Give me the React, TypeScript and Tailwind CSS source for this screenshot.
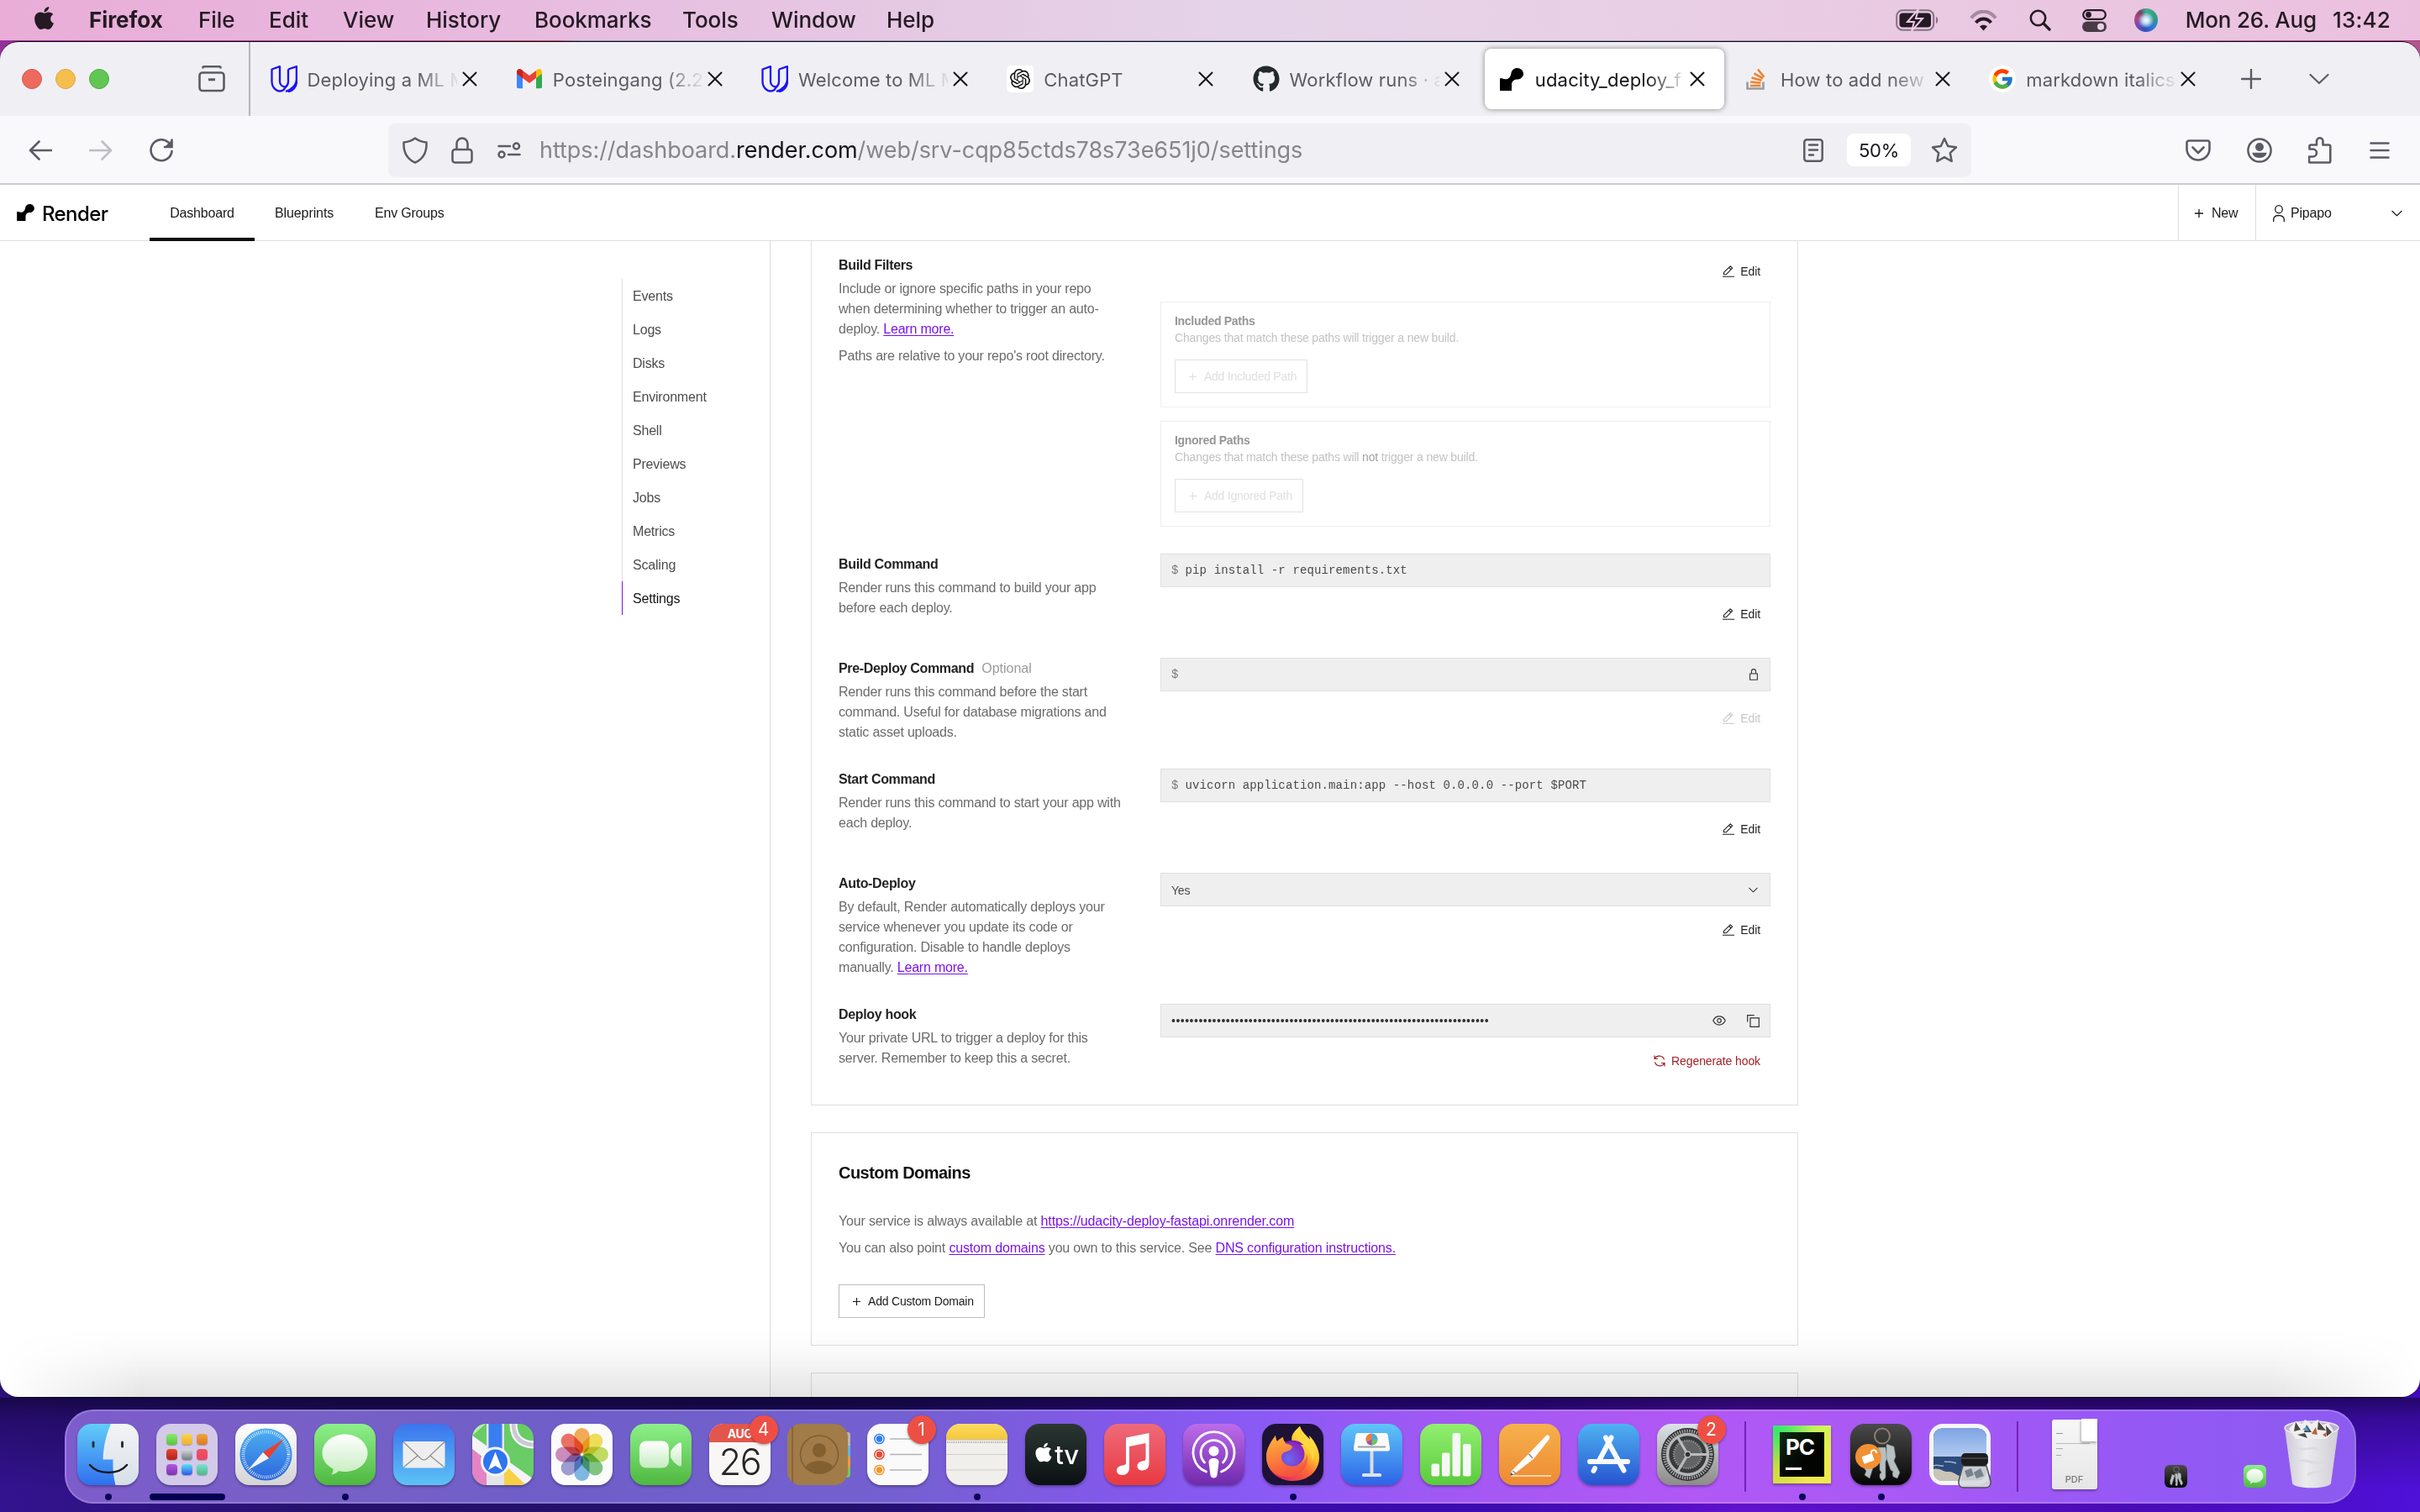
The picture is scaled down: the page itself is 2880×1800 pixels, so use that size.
import React from "react";
import { FaApple, FaGithub } from "react-icons/fa";
import { FcGoogle } from "react-icons/fc";
import { SiOpenai } from "react-icons/si";

/* ---------- shared line icons ---------- */

type IconProps = { className?: string };

function RenderMark({ className }: IconProps) {
  return (
    <svg viewBox="0 0 28 27" className={className} fill="currentColor">
      <path d="M20.6 0C16.9 0 13.9 2.7 13.4 6.2 13 9.8 10.700 13.300 6.800 13.300H6.700C5.200 13.300 3.900 12.900 2.700 12.300H0V27H14V19.800C14 16.500 16.500 13.700 19.800 13.600H20.600C24.700 13.600 28 10.600 28 6.800S24.700 0 20.600 0Z" />
    </svg>
  );
}

function Udacity() {
  return (
    <svg viewBox="0 0 32 32" className="size-8" fill="none" stroke="#1c12f5" strokeWidth="2.300" strokeLinejoin="round">
      <path d="M1.500 4.500 11 1.200V19c0 4 3 6.500 7 6.500l-2.500 3.500C13 31 9 31 6.500 29 3 26.500 1.500 23.500 1.500 19V4.500Z" />
      <path d="M21 4.500 31 1.200V19c0 7-5 11.500-10.500 12.200M18 25.500c2-1.500 3-3.500 3-6.500V4.500" />
      <path d="M31 1.200V16c0 7-6 13-13 14.800" />
    </svg>
  );
}

function Gmail() {
  return (
    <svg viewBox="0 0 32 32" className="size-8">
      <path d="M1 8v17.500c0 1 .8 1.700 1.700 1.700H8V13Z" fill="#4285f4" />
      <path d="M24 13v14.200h5.300c1 0 1.700-.8 1.700-1.700V8Z" fill="#34a853" />
      <path d="M24 6v9l7-5.300V7.500c0-3-3.300-4.500-5.500-2.800Z" fill="#fbbc04" />
      <path d="M8 15V6l8 6 8-6v9l-8 6Z" fill="#ea4335" />
      <path d="M1 7.500v2.200L8 15V6L6.500 4.700C4.300 3 1 4.500 1 7.500Z" fill="#c5221f" />
    </svg>
  );
}

function StackOverflow() {
  return (
    <svg viewBox="0 0 32 32" className="size-8" fill="none" strokeWidth="2.600">
      <path d="M4.500 19.500v8h19v-8" stroke="#9a9b9e" />
      <g stroke="#f0822a">
        <path d="M8 24h12.500M8.200 19.500l12.300 1.300M9.500 14.500l12 3.200M12.500 9.300l10.500 6M17 4.500l7.500 9.200" />
      </g>
    </svg>
  );
}

function CloseX() {
  return (
    <svg viewBox="0 0 18 18" className="size-[18px]" stroke="#15141a" strokeWidth="2" strokeLinecap="round">
      <path d="M1.500 1.500l15 15M16.500 1.500l-15 15" />
    </svg>
  );
}

function Chevron({ className }: IconProps) {
  return (
    <svg viewBox="0 0 24 14" className={className} fill="none" stroke="currentColor" strokeWidth="2.200" strokeLinecap="round" strokeLinejoin="round">
      <path d="M1.500 2l10.500 10 10.500-10" />
    </svg>
  );
}

function Plus({ className }: IconProps) {
  return (
    <svg viewBox="0 0 10 10" className={className} fill="none" stroke="currentColor" strokeWidth="1.300">
      <path d="M5 0v10M0 5h10" />
    </svg>
  );
}

function Pencil() {
  return (
    <svg viewBox="0 0 14 14" className="size-[14px]" fill="none" stroke="currentColor" strokeWidth="1.100" strokeLinejoin="round">
      <path d="M0 13.300h14M1.500 10.800v-2.500L9.200.8l2.500 2.400-7.500 7.600H1.500ZM7.600 2.500l2.500 2.400" />
    </svg>
  );
}

/* ---------- menu bar ---------- */

const menus = [
  ["File", "w-[84px]"],
  ["Edit", "w-[88px]"],
  ["View", "w-[99px]"],
  ["History", "w-[129px]"],
  ["Bookmarks", "w-[176px]"],
  ["Tools", "w-[106px]"],
  ["Window", "w-[137px]"],
  ["Help", "w-[80px]"],
];

function MenuBar() {
  return (
    <div className="flex h-12 items-center bg-[linear-gradient(to_right,#e9add8,#e8b8de_18%,#e5cbe4_40%,#e5d4e9_52%,#e8d0e6_66%,#eac8e2_82%,#ebc0de)] text-[26px] text-[#241a24]">
      <FaApple className="ml-[37px] size-[31px] -translate-y-[3px]" />
      <span className="ml-[38px] w-[130px] -translate-y-px font-bold tracking-[-0.050px]">Firefox</span>
      {menus.map(([m, w]) => (
        <span key={m} className={"-translate-y-px font-medium tracking-[-0.050px] " + w}>{m}</span>
      ))}
      <div className="ml-auto flex items-center pr-[35px]">
        <svg viewBox="0 0 52 26" className="h-[26px] w-[52px]">
          <rect x="1.200" y="1.200" width="44" height="23.600" rx="7" fill="none" stroke="#241a24" strokeOpacity=".5" strokeWidth="2" />
          <path d="M48 9c3 1 3 7 0 8Z" fill="#241a24" fillOpacity=".5" />
          <rect x="4.500" y="4.500" width="37.500" height="17" rx="4" fill="#241a24" />
          <path d="M27 0 14 15h8l-3 11 13-15h-8Z" fill="#241a24" stroke="#eacbe4" strokeWidth="2" />
        </svg>
        <svg viewBox="0 0 33 25" className="ml-[36px] h-[25px] w-[33px]" fill="none" stroke="#241a24" strokeWidth="4">
          <path d="M2 9.500C10-1 23-1 31 9.500" strokeOpacity=".35" />
          <path d="M7.500 15c5-6 13-6 18 0" />
          <path d="M16.500 24.500 12 19.500c2.500-2.500 6.500-2.500 9 0Z" fill="#241a24" stroke="none" />
        </svg>
        <svg viewBox="0 0 26 26" className="ml-[38px] size-[26px]" fill="none" stroke="#241a24" strokeWidth="2.600" strokeLinecap="round">
          <circle cx="10.500" cy="10.500" r="8.700" />
          <path d="M17 17l7 7" strokeWidth="3.200" />
        </svg>
        <svg viewBox="0 0 29 27" className="ml-[37px] h-[27px] w-[29px]">
          <rect x="1.200" y="1.200" width="26.600" height="10.600" rx="5.300" fill="none" stroke="#241a24" strokeWidth="2.200" />
          <circle cx="7.500" cy="6.500" r="3.400" fill="#241a24" />
          <rect x="0" y="14.500" width="29" height="12.500" rx="6.200" fill="#483a46" />
          <circle cx="22" cy="20.700" r="4" fill="#ead0e6" />
        </svg>
        <div className="ml-[33px] size-7 rounded-full bg-[radial-gradient(circle_at_50%_50%,#fff_0%,#b9d9f0_22%,transparent_48%),conic-gradient(#3fae8c,#2f9d7e_20%,#2f7ad6_38%,#2b53b8_52%,#6a4bc0_64%,#b5447f_78%,#78436c_90%,#3fae8c)]" />
        <span className="ml-[33px] -translate-y-px font-medium tracking-[-0.200px]">Mon 26. Aug</span>
        <span className="ml-[19px] -translate-y-px font-medium tracking-[0.200px]">13:42</span>
      </div>
    </div>
  );
}

/* ---------- browser chrome ---------- */

const tabs: { icon: React.ReactNode; title: string; active?: boolean }[] = [
  { icon: <Udacity />, title: "Deploying a ML M" },
  { icon: <Gmail />, title: "Posteingang (2.2" },
  { icon: <Udacity />, title: "Welcome to ML M" },
  {
    icon: (
      <span className="flex size-8 items-center justify-center rounded-[5px] bg-white">
        <SiOpenai className="size-6" color="#111" />
      </span>
    ),
    title: "ChatGPT",
  },
  { icon: <FaGithub className="size-8" color="#24292e" />, title: "Workflow runs · a" },
  { icon: <RenderMark className="mx-0.5 h-[27px] w-7 text-black" />, title: "udacity_deploy_f", active: true },
  { icon: <StackOverflow />, title: "How to add new l" },
  {
    icon: (
      <span className="flex size-8 items-center justify-center rounded-full bg-white">
        <FcGoogle className="size-7" />
      </span>
    ),
    title: "markdown italics",
  },
];

function TabBar() {
  return (
    <div className="flex h-[88px] shrink-0 items-center bg-[#f0f0f4] text-[#5b5b66]">
      <div className="flex gap-4 pl-[26px]">
        <span className="size-6 rounded-full border border-[#d8574c] bg-[#ee6a5f]" />
        <span className="size-6 rounded-full border border-[#dba53f] bg-[#f5bf4f]" />
        <span className="size-6 rounded-full border border-[#50ab43] bg-[#61c654]" />
      </div>
      <svg viewBox="0 0 32 32" className="ml-[106px] size-8" fill="none" stroke="#5b5b66" strokeWidth="2.600">
        <rect x="1.500" y="8.500" width="29" height="21.500" rx="3.500" />
        <path d="M5.500 2.500c0-1 .5-1.200 1.200-1.200h18.600c.7 0 1.200.2 1.200 1.200" strokeLinecap="round" />
        <path d="M12 16.800h8" strokeWidth="3" />
      </svg>
      <div className="ml-[28px] h-full w-[2px] bg-[#b5b5bb]" />
      <div className="ml-[4px] flex w-[2338px]">
        {tabs.map((t, i) => (
          <div
            key={i}
            className={
              "mx-[3.600px] flex h-[72px] flex-1 items-center rounded-lg pl-4 " +
              (t.active ? "bg-white text-[#15141a] shadow-[0_0_6px_rgba(0,0,0,0.45)]" : "")
            }
          >
            {t.icon}
            <span className="ml-[12px] w-[178px] overflow-hidden pt-[3px] text-[22px] tracking-[0.150px] whitespace-nowrap [mask-image:linear-gradient(to_right,black_74%,rgba(0,0,0,0.15)_98%)]">
              {t.title}
            </span>
            <span className="ml-1.5"><CloseX /></span>
          </div>
        ))}
      </div>
      <svg viewBox="0 0 24 24" className="ml-[27px] size-6" stroke="#5b5b66" strokeWidth="2.400" strokeLinecap="round">
        <path d="M12 1v22M1 12h22" />
      </svg>
      <Chevron className="ml-[57px] h-[14px] w-6" />
    </div>
  );
}

function Toolbar() {
  return (
    <div className="flex h-20 shrink-0 items-center bg-[#f9f9fb] pt-px text-[#5b5b66]">
      <svg viewBox="0 0 28 24" className="ml-[34px] h-6 w-7" fill="none" stroke="#5b5b66" strokeWidth="2.600" strokeLinecap="round" strokeLinejoin="round">
        <path d="M27 12H2M12.500 1.500 2 12l10.500 10.500" />
      </svg>
      <svg viewBox="0 0 28 24" className="ml-[44px] h-6 w-7" fill="none" stroke="#bdbdc3" strokeWidth="2.600" strokeLinecap="round" strokeLinejoin="round">
        <path d="M1 12h25M15.500 1.500 26 12 15.500 22.500" />
      </svg>
      <svg viewBox="0 0 28 28" className="ml-[44px] size-7" fill="none" stroke="#5b5b66" strokeWidth="2.600" strokeLinecap="round">
        <path d="M26.500 15a12.500 12.500 0 1 1-4-10.500" />
        <path d="M26.500 1.500v8.500h-8.500Z" fill="#5b5b66" stroke="none" />
        <path d="M26.500 1.500v8.500h-8.500" />
      </svg>

      <div className="ml-[256px] flex h-16 w-[1884px] items-center rounded-lg bg-[#f0f0f4]">
        <svg viewBox="0 0 30 32" className="ml-[17px] h-8 w-[30px]" fill="none" stroke="#5b5b66" strokeWidth="2.500" strokeLinejoin="round">
          <path d="M15 1.500C11 4.500 6 6 1.500 6.500 1 17 5 26 15 30.500 25 26 29 17 28.500 6.500 24 6 19 4.500 15 1.500Z" />
        </svg>
        <svg viewBox="0 0 26 32" className="ml-[28px] h-8 w-[26px]" fill="none" stroke="#5b5b66" strokeWidth="2.500">
          <rect x="1.500" y="15" width="23" height="15.500" rx="3" />
          <path d="M6.500 15V8a6.500 6.500 0 0 1 13 0v7" />
        </svg>
        <svg viewBox="0 0 28 20" className="ml-[29px] h-5 w-7" fill="none" stroke="#5b5b66" strokeWidth="2.500" strokeLinecap="round">
          <path d="M1.500 5H15M13 15h13.500" />
          <circle cx="22.500" cy="5" r="3.500" />
          <circle cx="5" cy="15" r="3.500" />
        </svg>
        <div className="ml-[22px] pt-[2px] text-[27px] tracking-[-0.060px] whitespace-nowrap text-[#85858c]">
          https://dashboard.<span className="text-[#15141a]">render.com</span>/web/srv-cqp85ctds78s73e651j0/settings
        </div>
        <div className="ml-auto flex items-center pr-[16px]">
          <svg viewBox="0 0 24 28" className="h-7 w-6" fill="none" stroke="#5b5b66" strokeWidth="2.500" strokeLinecap="round">
            <rect x="1.300" y="1.300" width="21.400" height="25.400" rx="3" />
            <path d="M7 7.500h10M7 13.500h10M7 19.500h5" />
          </svg>
          <span className="ml-7 flex h-[39px] w-[76px] items-center justify-center rounded-lg bg-white pt-px text-[22px] tracking-[-0.300px] text-[#15141a]">50%</span>
          <svg viewBox="0 0 32 31" className="ml-6 h-[31px] w-8" fill="none" stroke="#5b5b66" strokeWidth="2.500" strokeLinejoin="round">
            <path d="M16 2l4.200 9 9.800 1.300-7.200 6.800 1.900 9.900-8.700-4.900L7.300 29l1.900-9.900L2 12.300 11.800 11Z" />
          </svg>
        </div>
      </div>

      <svg viewBox="0 0 30 26" className="ml-[255px] h-[26px] w-[30px]" fill="none" stroke="#5b5b66" strokeWidth="2.600" strokeLinecap="round" strokeLinejoin="round">
        <path d="M4 1.500h22c1.500 0 2.500 1 2.500 2.500v7C28.500 19 22 24.500 15 24.500S1.500 19 1.500 11V4c0-1.500 1-2.500 2.500-2.500Z" />
        <path d="M8.500 9.500 15 16l6.500-6.500" />
      </svg>
      <svg viewBox="0 0 30 30" className="ml-[43px] size-[30px]">
        <circle cx="15" cy="15" r="13.600" fill="none" stroke="#5b5b66" strokeWidth="2.500" />
        <circle cx="15" cy="11" r="5" fill="#5b5b66" />
        <path d="M6.500 17.800h17c0 3.700-4 6.200-8.500 6.200s-8.500-2.500-8.500-6.200Z" fill="#5b5b66" />
      </svg>
      <svg viewBox="0 0 28 32" className="ml-[43px] h-8 w-7" fill="none" stroke="#5b5b66" strokeWidth="2.600" strokeLinejoin="round">
        <path d="M2 30.500c-.7 0-1-.3-1-1v-6h4.500a4.500 4.500 0 0 0 0-9H1.500V11c0-1 .7-1.500 1.500-1.500h7V5a3.500 3.500 0 0 1 7.500 0v4.500h7c1 0 1.800.7 1.800 1.700v17.500c0 1-.8 1.800-1.800 1.800Z" />
      </svg>
      <svg viewBox="0 0 24 20" className="ml-[45px] h-5 w-6" stroke="#5b5b66" strokeWidth="2.500" strokeLinecap="round">
        <path d="M1.500 1.500h21M1.500 10h21M1.500 18.500h21" />
      </svg>
    </div>
  );
}

/* ---------- page ---------- */

function PageHeader() {
  return (
    <div className="flex h-[67px] shrink-0 items-stretch border-b border-[#dedede] text-[16px] tracking-[-0.200px] text-[#1a1a1a]">
      <div className="flex w-[178px] items-center pl-5">
        <RenderMark className="h-5 w-[21px] text-black" />
        <span className="ml-[9px] pt-[3px] text-[24px] font-medium tracking-[-0.600px] text-black [font-family:Inter,sans-serif]">Render</span>
      </div>
      <div className="-mb-px flex w-[125px] items-center justify-center border-b-4 border-[#0d0d0d] pt-[5px]">Dashboard</div>
      <div className="flex w-[119px] items-center pt-px pl-6 tracking-[-0.100px]">Blueprints</div>
      <div className="flex items-center pt-px pl-6">Env Groups</div>
      <div className="ml-auto flex w-[92px] items-center border-l border-[#dedede] pt-px pl-[19px]">
        <Plus className="size-[10px]" />
        <span className="ml-[10px]">New</span>
      </div>
      <div className="flex w-[196px] items-center border-l border-[#dedede] pt-px pl-5">
        <svg viewBox="0 0 14 20" className="h-5 w-[14px]" fill="none" stroke="currentColor" strokeWidth="1.300">
          <ellipse cx="7" cy="5.200" rx="4.300" ry="4.500" />
          <path d="M.7 20v-2.500c0-3 2.300-5 6.300-5s6.300 2 6.300 5V20" />
        </svg>
        <span className="ml-[7px]">Pipapo</span>
        <Chevron className="mr-[21px] ml-auto h-[8px] w-[13px]" />
      </div>
    </div>
  );
}

const navItems = ["Events", "Logs", "Disks", "Environment", "Shell", "Previews", "Jobs", "Metrics", "Scaling", "Settings"];

function SideNav() {
  return (
    <div className="w-[917px] shrink-0 border-r border-[#dedede]">
      <div className="mt-[45px] ml-[740px]">
        {navItems.map((n) => (
          <div
            key={n}
            className={
              "flex h-10 items-center border-l pt-[2px] pl-3 text-[16px] tracking-[-0.200px] " +
              (n === "Settings" ? "border-[#7a12e8] text-[#141414]" : "border-[#dedede] text-[#4d4d4d]")
            }
          >
            {n}
          </div>
        ))}
      </div>
    </div>
  );
}

function Link({ children }: { children: React.ReactNode }) {
  return <span className="text-[#7a12e8] underline decoration-1 underline-offset-2">{children}</span>;
}

function Row({ title, note, lines, after, children }: { title: string; note?: string; lines: React.ReactNode[]; after?: string; children: React.ReactNode }) {
  return (
    <div className="flex">
      <div className="w-[383px] shrink-0 text-[16px] leading-6 tracking-[-0.200px] whitespace-nowrap text-[#6b6b6b]">
        <div className="relative top-px mb-1">
          <span className="font-bold tracking-[-0.330px] text-[#222]">{title}</span>
          {note && <span className="ml-[9px] tracking-[0px] text-[#9b9b9b]">{note}</span>}
        </div>
        {lines.map((l, i) => (
          <div key={i} className="relative top-px">{l}</div>
        ))}
        {after && <div className="relative top-px mt-2">{after}</div>}
      </div>
      <div className="flex-1">{children}</div>
    </div>
  );
}

function EditButton({ muted }: { muted?: boolean }) {
  return (
    <div className={"flex h-10 items-center justify-end pr-3 text-[14px] tracking-[-0.100px] " + (muted ? "text-[#c6c6c6]" : "text-[#1f1f1f]")}>
      <Pencil />
      <span className="ml-[7px]">Edit</span>
    </div>
  );
}

function Field({ children }: { children: React.ReactNode }) {
  return <div className="flex h-10 items-center border border-[#e0e0e0] bg-[#efefef] px-3 text-[14px] text-[#4a4a4a]">{children}</div>;
}

function Command({ text }: { text?: string }) {
  return (
    <div className="flex gap-[8px] pt-px text-[14px] tracking-[0.125px] whitespace-pre [font-family:'Liberation_Mono',monospace]">
      <span className="text-[#7a7a7a]">$</span>
      <span>{text}</span>
    </div>
  );
}

function PathBox({ title, desc, button }: { title: string; desc: React.ReactNode; button: string }) {
  return (
    <div className="h-[126px] border border-[#eeeeee] px-4 pt-3 text-[14px] leading-5 tracking-[-0.160px]">
      <div className="font-bold tracking-[-0.300px] text-[#969696]">{title}</div>
      <div className="text-[#c2c2c2]">{desc}</div>
      <div className="mt-4 inline-flex h-10 items-center border border-[#e2e2e2] pr-3 pl-4 text-[#e0e0e0]">
        <Plus className="size-[9px]" />
        <span className="ml-[9px] tracking-[-0.250px]">{button}</span>
      </div>
    </div>
  );
}

function Page() {
  return (
    <div className="relative flex min-h-0 flex-1 flex-col overflow-hidden bg-white [font-family:'Liberation_Sans',sans-serif]">
      <PageHeader />
      <div className="flex min-h-0 flex-1 overflow-hidden">
        <SideNav />
        <div className="ml-12 w-[1175px] shrink-0">
          <div className="flex flex-col gap-8 border-x border-b border-[#dfdfdf] px-8 pt-4 pb-8">
            <Row
              title="Build Filters"
              lines={[
                "Include or ignore specific paths in your repo",
                "when determining whether to trigger an auto-",
                <>deploy. <Link>Learn more.</Link></>,
              ]}
              after="Paths are relative to your repo's root directory."
            >
              <EditButton />
              <div className="mt-4 flex flex-col gap-4">
                <PathBox title="Included Paths" desc="Changes that match these paths will trigger a new build." button="Add Included Path" />
                <PathBox
                  title="Ignored Paths"
                  desc={<>Changes that match these paths will <span className="text-[#a2a2a2]">not</span> trigger a new build.</>}
                  button="Add Ignored Path"
                />
              </div>
            </Row>
            <Row title="Build Command" lines={["Render runs this command to build your app", "before each deploy."]}>
              <Field><Command text="pip install -r requirements.txt" /></Field>
              <div className="mt-3"><EditButton /></div>
            </Row>
            <Row
              title="Pre-Deploy Command"
              note="Optional"
              lines={["Render runs this command before the start", "command. Useful for database migrations and", "static asset uploads."]}
            >
              <Field>
                <Command />
                <svg viewBox="0 0 10 14" className="mr-[2px] ml-auto h-[14px] w-[10px]" fill="none" stroke="#333" strokeWidth="1.100">
                  <path d="M.6 6h8.800v7.300H.6ZM2.500 6V3.200c0-3.400 5-3.400 5 0V6" />
                </svg>
              </Field>
              <div className="mt-3"><EditButton muted /></div>
            </Row>
            <Row title="Start Command" lines={["Render runs this command to start your app with", "each deploy."]}>
              <Field><Command text="uvicorn application.main:app --host 0.0.0.0 --port $PORT" /></Field>
              <div className="mt-3"><EditButton /></div>
            </Row>
            <Row
              title="Auto-Deploy"
              lines={[
                "By default, Render automatically deploys your",
                "service whenever you update its code or",
                "configuration. Disable to handle deploys",
                <>manually. <Link>Learn more.</Link></>,
              ]}
            >
              <Field>
                <span className="pt-0.5 tracking-[-0.200px]">Yes</span>
                <Chevron className="mr-[2px] ml-auto h-[7px] w-[11px] text-[#333]" />
              </Field>
              <div className="mt-2"><EditButton /></div>
            </Row>
            <Row title="Deploy hook" lines={["Your private URL to trigger a deploy for this", "server. Remember to keep this a secret."]}>
              <Field>
                <span className="tracking-[0.500px] text-[#333]">{"•".repeat(70)}</span>
                <svg viewBox="0 0 16 12" className="ml-auto h-3 w-4" fill="none" stroke="#333" strokeWidth="1.200">
                  <path d="M.8 6C4-.8 12-.8 15.200 6 12 12.800 4 12.800.8 6Z" />
                  <circle cx="8" cy="6" r="2.300" />
                </svg>
                <svg viewBox="0 0 15 15" className="ml-[25px] size-[15px]" fill="none" stroke="#333" strokeWidth="1.200">
                  <path d="M4 3.800h10.300v10.500H4ZM.7 8.500V.7h8" />
                </svg>
              </Field>
              <div className="mt-2 flex h-10 items-center justify-end pr-3 text-[14px] tracking-[-0.100px] text-[#a3212b]">
                <svg viewBox="0 0 14 14" className="size-[14px]" fill="none" stroke="currentColor" strokeWidth="1.200">
                  <path d="M1 .5v4h4M1.200 4.200C3.500 0 10.500-.2 12.600 5.500M13 13.500v-4H9M12.800 9.800C10.500 14 3.500 14.200 1.400 8.500" />
                </svg>
                <span className="ml-[7px]">Regenerate hook</span>
              </div>
            </Row>
          </div>

          <div className="mt-8 border border-[#dfdfdf] p-8 text-[16px] leading-6 tracking-[-0.170px] text-[#6b6b6b]">
            <div className="relative top-px text-[20px] leading-7 font-bold tracking-[-0.550px] text-[#111]">Custom Domains</div>
            <div className="relative top-px mt-8">
              Your service is always available at <span className="tracking-[-0.100px]"><Link>https://udacity-deploy-fastapi.onrender.com</Link></span>
            </div>
            <div className="relative top-px mt-2">
              You can also point <Link>custom domains</Link> you own to this service. See <Link>DNS configuration instructions.</Link>
            </div>
            <div className="mt-8 flex h-10 w-[174px] items-center border border-[#bdbdbd] pl-4 text-[14px] text-[#1a1a1a]">
              <Plus className="size-[9px]" />
              <span className="ml-[9px] tracking-[-0.200px] whitespace-nowrap">Add Custom Domain</span>
            </div>
          </div>

          <div className="mt-8 h-[60px] border border-[#dfdfdf]" />
        </div>
      </div>
      <div className="absolute inset-x-0 bottom-0 h-20 bg-[linear-gradient(to_bottom,transparent,rgba(0,0,0,0.025)_35%,rgba(0,0,0,0.105))] [mask-image:linear-gradient(to_right,transparent,black_170px,black_2700px,transparent)]" />
    </div>
  );
}

/* ---------- dock icons ---------- */

const TILE = "size-[73px] rounded-[17px] overflow-hidden shadow-[0_2px_3px_rgba(0,0,0,0.3)]";

function Finder() {
  return (
    <svg viewBox="0 0 73 73" className={TILE}>
      <defs>
        <linearGradient id="fb" x2="0" y2="1"><stop stopColor="#62cdf8" /><stop offset="1" stopColor="#2f6ff0" /></linearGradient>
        <linearGradient id="fw" x2="0" y2="1"><stop stopColor="#f4f4f5" /><stop offset="1" stopColor="#d6dfe8" /></linearGradient>
      </defs>
      <rect width="73" height="73" fill="url(#fb)" />
      <path d="M40 0C34 14 31 28 30.500 42.500h12C42 54 43 64 45.500 73H73V0Z" fill="url(#fw)" />
      <path d="M19 22v5M53.500 22v5" stroke="#26303c" strokeWidth="3" strokeLinecap="round" />
      <path d="M15 49c10 12 34 12 44 0" fill="none" stroke="#16191f" strokeWidth="2.400" strokeLinecap="round" />
    </svg>
  );
}

const padColors = [
  ["#8ee86b", "#54c73c"], ["#f7d54e", "#eeb02f"], ["#f0a33a", "#dd7a25"],
  ["#e5492f", "#b5221b"], ["#d7dce0", "#737b82"], ["#ef5264", "#ea4560"],
  ["#b45ae0", "#7d30b0"], ["#5fe0f5", "#2c59e8"], ["#7fe0d0", "#4cb88a"],
];

function Launchpad() {
  return (
    <div className={TILE + " grid grid-cols-[13px_13px_13px] content-center justify-center gap-x-[5px] gap-y-[5px] bg-[#d3cae9]"}>
      {padColors.map(([a, b], i) => (
        <span key={i} className="size-[13px] rounded-[4px] shadow-[0_1px_1px_rgba(0,0,0,.25)]" style={{ background: `linear-gradient(${a}, ${b})` }} />
      ))}
    </div>
  );
}

function Safari() {
  return (
    <svg viewBox="0 0 73 73" className={TILE}>
      <defs>
        <linearGradient id="sbg" x2="0" y2="1"><stop stopColor="#fff" /><stop offset="1" stopColor="#d4d4d4" /></linearGradient>
        <linearGradient id="sd" x2="0" y2="1"><stop stopColor="#4fb0f0" /><stop offset="1" stopColor="#2a66dd" /></linearGradient>
      </defs>
      <rect width="73" height="73" fill="url(#sbg)" />
      <circle cx="36.500" cy="36.500" r="31" fill="url(#sd)" />
      <circle cx="36.500" cy="36.500" r="27" fill="none" stroke="#fff" strokeOpacity=".8" strokeWidth="4" strokeDasharray=".9 1.500" />
      <path d="M58 18 40 41l-7-7Z" fill="#e8402f" />
      <path d="M15 55l18-21 7 7Z" fill="#f4f4f4" />
    </svg>
  );
}

function Messages({ className }: IconProps) {
  return (
    <svg viewBox="0 0 73 73" className={className}>
      <defs>
        <linearGradient id="mg" x2="0" y2="1"><stop stopColor="#8df08a" /><stop offset="1" stopColor="#4fb83f" /></linearGradient>
        <linearGradient id="mb" x2="0" y2="1"><stop stopColor="#fff" /><stop offset="1" stopColor="#c6ecc0" /></linearGradient>
      </defs>
      <rect width="73" height="73" fill="url(#mg)" />
      <path d="M36.500 12.500c15 0 27 10 27 22.500s-12 22-27 22c-3 0-5-.3-7.500-1-2 2.500-5.500 4.200-9 4.500 2-2 2.800-4.500 2.300-7C14.500 49.500 9.500 43 9.500 35c0-12.500 12-22.500 27-22.500Z" fill="url(#mb)" />
    </svg>
  );
}

function Mail() {
  return (
    <svg viewBox="0 0 73 73" className={TILE}>
      <defs>
        <linearGradient id="ma" x2="0" y2="1"><stop stopColor="#3b74ee" /><stop offset="1" stopColor="#5cc3f6" /></linearGradient>
      </defs>
      <rect width="73" height="73" fill="url(#ma)" />
      <rect x="11.500" y="21" width="50" height="31.500" rx="3" fill="#eeeeee" />
      <path d="M12.500 22 33 41.500c2 1.800 5 1.800 7 0L60.500 22M12.500 51.500 29 38M60.500 51.500 44 38" fill="none" stroke="#8e8e8e" strokeWidth="1.200" />
    </svg>
  );
}

function Maps() {
  return (
    <svg viewBox="0 0 73 73" className={TILE}>
      <rect width="73" height="73" fill="#69cc67" />
      <path d="M0 14 16 0H0Z" fill="#b9ecaa" />
      <path d="M0 14 73 66v7H56L0 30Z" fill="#f4f4f6" />
      <path d="M0 30 22 48v25H0Z" fill="#e583c4" />
      <path d="M38 48 64 73H38Z" fill="#f9cf45" />
      <path d="M17 0h21v73H17Z" fill="#e3e5ea" />
      <path d="M19.500 0h16v40h-16Z" fill="#3a7ef0" />
      <path d="M49 0c0 16 8 24 24 25" fill="none" stroke="#fff" strokeWidth="9" />
      <path d="M49 0c0 16 8 24 24 25" fill="none" stroke="#c9cbd4" strokeWidth="5" />
      <circle cx="27.500" cy="45" r="17.500" fill="#f6f6f8" />
      <circle cx="27.500" cy="45" r="14.500" fill="#2f74f0" />
      <path d="M27.500 33.500 36 55l-8.500-5L19 55Z" fill="#fff" />
    </svg>
  );
}

const petals = ["#f5a03a", "#f0dc3c", "#b9d84c", "#6dbd6e", "#6aaee0", "#8d8fd0", "#c779b4", "#ec5a4c"];

function Photos() {
  return (
    <svg viewBox="0 0 73 73" className={TILE}>
      <rect width="73" height="73" fill="#fbfbfb" />
      {petals.map((c, i) => (
        <rect key={c} x="27.500" y="5" width="18" height="30" rx="9" fill={c} fillOpacity=".85" className="mix-blend-multiply" transform={`rotate(${i * 45} 36.500 36.500)`} />
      ))}
    </svg>
  );
}

function FaceTime() {
  return (
    <svg viewBox="0 0 73 73" className={TILE}>
      <rect width="73" height="73" fill="url(#mg)" />
      <rect x="11" y="20.500" width="35" height="32" rx="8" fill="url(#mb)" />
      <path d="M48 33c3-5 8-10 11-10.500 1.500 0 2 .5 2 2v24c0 1.500-.5 2-2 2C56 50 51 45 48 40Z" fill="url(#mb)" />
    </svg>
  );
}

function Calendar() {
  return (
    <div className={TILE + " flex flex-col bg-[#f8f7f6] text-center"}>
      <div className="h-[22px] bg-[#e2564c] text-[14px] leading-[23px] font-bold tracking-[-0.400px] text-white">AUG</div>
      <div className="text-[43px] leading-[47px] font-light tracking-[-1.500px] text-[#262626]">26</div>
    </div>
  );
}

function Contacts() {
  return (
    <svg viewBox="0 0 77 73" className="h-[73px] w-[77px]">
      <path d="M68 10h5a3 3 0 0 1 3 3v13h-8Z" fill="#b9b6ae" />
      <path d="M68 26h8v13h-8Z" fill="#63b5e3" />
      <path d="M68 39h8v13h-8Z" fill="#f19a38" />
      <path d="M68 52h8v8a4 4 0 0 1-4 4h-4Z" fill="#6fca5a" />
      <rect x="1" width="72" height="73" rx="16" fill="#a17c48" />
      <path d="M7 3v67" stroke="#805f34" strokeWidth="1.500" />
      <circle cx="39" cy="36.500" r="22.500" fill="none" stroke="#7f5e32" strokeWidth="1.600" />
      <ellipse cx="39" cy="31.500" rx="8" ry="8.500" fill="#82602f" />
      <path d="M23 51c4-9 28-9 32 0-8 11-24 11-32 0Z" fill="#82602f" />
    </svg>
  );
}

function Reminders() {
  return (
    <svg viewBox="0 0 73 73" className={TILE}>
      <rect width="73" height="73" fill="#fafafa" />
      {["#2f7cf0", "#e34b38", "#f09a2f"].map((c, i) => (
        <g key={c}>
          <circle cx="14.500" cy={18 + i * 18.500} r="5.600" fill="none" stroke={c} strokeWidth="1.500" />
          <circle cx="14.500" cy={18 + i * 18.500} r="3.700" fill={c} />
          <path d={`M27 ${18 + i * 18.500}h38`} stroke="#b4b4b6" strokeWidth="1.500" />
        </g>
      ))}
    </svg>
  );
}

function Notes() {
  return (
    <svg viewBox="0 0 73 73" className={TILE}>
      <rect width="73" height="73" fill="#f0efec" />
      <defs><linearGradient id="ny" x2="0" y2="1"><stop stopColor="#fbdc63" /><stop offset="1" stopColor="#f6c737" /></linearGradient></defs>
      <rect width="73" height="18.500" fill="url(#ny)" />
      <path d="M0 19h73" stroke="#b0a78d" strokeWidth=".8" />
      <path d="M1 22h72" stroke="#9a9a97" strokeWidth="1.300" strokeDasharray="1.300 1.300" />
      <path d="M0 36.500h73M0 55h73" stroke="#cfceca" strokeWidth="1.200" />
    </svg>
  );
}

function AppleTv() {
  return (
    <div className={TILE + " flex items-center justify-center bg-[linear-gradient(#2b3733,#0b1012)] text-white"}>
      <FaApple className="size-[26px] -translate-y-0.5" />
      <span className="text-[31px] leading-none font-medium tracking-[-0.300px]">tv</span>
    </div>
  );
}

function Music() {
  return (
    <svg viewBox="0 0 73 73" className={TILE}>
      <defs><linearGradient id="mu" x2="0" y2="1"><stop stopColor="#ee6a7b" /><stop offset="1" stopColor="#e93a41" /></linearGradient></defs>
      <rect width="73" height="73" fill="url(#mu)" />
      <path d="M26 16.500 53.500 11v36.500c0 5-3.500 8-8 8-3.500 0-6-2-6-5 0-4 3-5.500 7-6.200 2-.3 3-1 3-3V23L30 27v25.500c0 5-3.500 8.500-8.500 8.500-4 0-6.500-2-6.500-5.200 0-4 3-5.600 7-6.300 3-.5 4-1 4-3Z" fill="#fff" />
    </svg>
  );
}

function Podcasts() {
  return (
    <svg viewBox="0 0 73 73" className={TILE}>
      <defs><linearGradient id="po" x2="0" y2="1"><stop stopColor="#bd6cea" /><stop offset="1" stopColor="#6f2aac" /></linearGradient></defs>
      <rect width="73" height="73" fill="url(#po)" />
      <g fill="none" stroke="#fff" strokeWidth="2.800" strokeLinecap="round">
        <path d="M27.500 57A24.500 24.500 0 1 1 45.500 57" />
        <path d="M25.500 46a15.500 15.500 0 1 1 22 0" />
      </g>
      <circle cx="36.500" cy="32.500" r="6" fill="#fff" />
      <path d="M36.500 41c4 0 6 1.500 6 5l-2 15c-.3 2.500-2 3.500-4 3.500s-3.700-1-4-3.500l-2-15c0-3.500 2-5 6-5Z" fill="#fff" />
    </svg>
  );
}

function Firefox() {
  return (
    <svg viewBox="0 0 73 73" className={TILE}>
      <defs>
        <linearGradient id="fx" x1=".85" y1=".1" x2=".25" y2=".95"><stop stopColor="#fff04d" /><stop offset=".35" stopColor="#ffc02f" /><stop offset=".6" stopColor="#fb6a35" /><stop offset="1" stopColor="#e02b63" /></linearGradient>
        <radialGradient id="fo" cx=".35" cy=".7" r=".8"><stop stopColor="#6a6af0" /><stop offset="1" stopColor="#8a1fb5" /></radialGradient>
        <linearGradient id="fl" x1=".2" y1="0" x2=".5" y2="1"><stop stopColor="#ffb43a" /><stop offset="1" stopColor="#f4503f" /></linearGradient>
      </defs>
      <rect width="73" height="73" fill="#1d1236" />
      <path d="M45 3c2 7 8 11 12 16-.2-2-1-4-1-5 8 8 12 18 12 26C68 57 54 68 37 68 18 68 5 55 5 39c0-9 5-17 11-25 0 3 1 6 2 7 2-2 4-4 7-5 0 3 1 5 3 6h8C33 14 39 8 45 3Z" fill="url(#fx)" />
      <path d="M20 30c4-11 20-14 30-5-5 0-8 1-9 4l-12 8Z" fill="#7a1fa8" />
      <circle cx="36" cy="36" r="14.500" fill="url(#fo)" />
      <path d="M5 39c0-9 5-17 11-25 0 3 1 6 2 7 2-2 4-4 7-5 0 4 2 7 5 8 4 1 6 2 6 4-1 3-4 4-7 5-4 1-6 3-6 7 0 7 6 11 13 11 9 0 17-6 17-15 4 10-3 25-19 27C16 65 5 54 5 39Z" fill="url(#fl)" />
      <path d="M45 3c2 7 8 11 12 16 6 8 6 18 3 25-1-9-5-15-12-20-5-4-8-10-3-21Z" fill="#ffd83f" />
    </svg>
  );
}

function Keynote() {
  return (
    <svg viewBox="0 0 73 73" className={TILE}>
      <defs><linearGradient id="kn" x2="0" y2="1"><stop stopColor="#5fc6f8" /><stop offset="1" stopColor="#2d63e8" /></linearGradient></defs>
      <rect width="73" height="73" fill="url(#kn)" />
      <path d="M34.500 32h4v29h-4Z" fill="#d9dde2" />
      <rect x="25" y="59" width="23" height="4" rx="1.500" fill="#dfe2e6" />
      <path d="M20 11h33c1.500 0 2.500 1 2.700 2.500L58 29c.3 2-.7 3.500-2.500 3.500h-38c-1.800 0-2.800-1.500-2.500-3.500l2.300-15.500C17.500 12 18.500 11 20 11Z" fill="#fafafa" />
      <path d="M20 27.500h33" stroke="#9ba2ab" strokeWidth="2" />
      <circle cx="36.500" cy="18.500" r="7" fill="#4aa9e8" />
      <path d="M36.500 18.500V25.500a7 7 0 0 0 7-7Z" fill="#72c35a" />
      <path d="M36.500 18.500v-7a7 7 0 0 0-6 10.500Z" fill="#ef7d3c" />
      <path d="M36.500 18.500 30.500 22c1 2 3.500 3.500 6 3.500Z" fill="#a750a8" />
    </svg>
  );
}

function Numbers() {
  return (
    <svg viewBox="0 0 73 73" className={TILE}>
      <defs><linearGradient id="nu" x2="0" y2="1"><stop stopColor="#92ef70" /><stop offset="1" stopColor="#5acb3c" /></linearGradient></defs>
      <rect width="73" height="73" fill="url(#nu)" />
      <g fill="#f6f8f6">
        <rect x="13.500" y="47.500" width="9.500" height="15" rx="2" />
        <rect x="26" y="34.500" width="9.500" height="28" rx="2" />
        <rect x="38.500" y="11" width="9.500" height="51.500" rx="2" />
        <rect x="51" y="24" width="9.500" height="38.500" rx="2" />
      </g>
    </svg>
  );
}

function Pages() {
  return (
    <svg viewBox="0 0 73 73" className={TILE}>
      <defs><linearGradient id="pg" x2="0" y2="1"><stop stopColor="#f6b14c" /><stop offset="1" stopColor="#ee8a33" /></linearGradient></defs>
      <rect width="73" height="73" fill="url(#pg)" />
      <path d="M14 62h48" stroke="#fbd4a4" strokeWidth="2.200" />
      <path d="M56 14c3-1.500 5 .5 4 4L41 42 19 59l-6 3 2-6 20-20Z" fill="#fbfbfb" />
      <path d="M35.500 36l4.500 5M16 56l4 3" stroke="#8c8c8c" strokeWidth="1.400" />
      <path d="M13 62l1.300-4 2.700 2.500Z" fill="#555" />
    </svg>
  );
}

function AppStore() {
  return (
    <svg viewBox="0 0 73 73" className={TILE}>
      <defs><linearGradient id="as" x2="0" y2="1"><stop stopColor="#4fb2f2" /><stop offset="1" stopColor="#2653d0" /></linearGradient></defs>
      <rect width="73" height="73" fill="url(#as)" />
      <g stroke="#f7f9fc" strokeWidth="6" strokeLinecap="round">
        <path d="M14 45h45" />
        <path d="M39.500 16.500 25.500 43M33 16.500 54.500 55.500M20 53l-1.500 3" />
      </g>
    </svg>
  );
}

function SystemSettings() {
  return (
    <svg viewBox="0 0 73 73" className={TILE}>
      <defs><linearGradient id="ss" x2="0" y2="1"><stop stopColor="#dbe2e6" /><stop offset="1" stopColor="#8b8b88" /></linearGradient></defs>
      <rect width="73" height="73" fill="url(#ss)" />
      <circle cx="36.500" cy="36.500" r="31.500" fill="#2c2d2f" />
      <circle cx="36.500" cy="36.500" r="28" fill="none" stroke="#a9abac" strokeWidth="4" strokeDasharray="1.500 1.400" />
      <circle cx="36.500" cy="36.500" r="24" fill="#38393b" stroke="#b5b7b8" strokeWidth="3.500" />
      <circle cx="36.500" cy="36.500" r="16.500" fill="#616365" stroke="#8b8d8e" strokeWidth="2.500" strokeDasharray="1.500 1.200" />
      <path d="M36.500 36.500H60M36.500 36.500 24.500 16M36.500 36.500 24.500 57" stroke="#b9bbbc" strokeWidth="3.200" />
      <circle cx="36.500" cy="36.500" r="3.500" fill="#303133" stroke="#b9bbbc" strokeWidth="1.500" />
    </svg>
  );
}

function PyCharm() {
  return (
    <div className="size-[69px] bg-[conic-gradient(from_-45deg,#35e86a,#c9f25a_20%,#e8ee4a_35%,#f3e64c_60%,#c9dd3c_80%,#35e86a)] p-[8px] shadow-[0_2px_3px_rgba(0,0,0,0.3)]">
      <div className="flex size-full flex-col items-start bg-[linear-gradient(135deg,#0f2a10,#020402_60%)] pl-[7px]">
        <span className="pt-[5px] text-[26px] leading-[26px] font-bold tracking-[-1px] text-white">PC</span>
        <span className="mt-[11px] h-[3px] w-[19px] bg-white" />
      </div>
    </div>
  );
}

function Keys({ className, tag }: { className: string; tag?: boolean }) {
  return (
    <svg viewBox="0 0 73 73" className={className}>
      <defs><linearGradient id="ky" x2="0" y2="1"><stop stopColor="#4a4a4a" /><stop offset="1" stopColor="#050505" /></linearGradient></defs>
      <rect width="73" height="73" fill="url(#ky)" />
      <g fill="#b7bfc0" stroke="#6d7475" strokeWidth=".6">
        <path d="M24 30l9 4-10 31-6-4 2-5-2-2Z" />
        <path d="M33 28h9l2 13-2 4v19l-4 4-3-4v-4l2-2-2-3V45Z" />
        <path d="M43 24l9 3 2 12-2 5 7 14-3 7-5-2-1-4 1-2-3-2-5-14Z" />
      </g>
      <circle cx="38" cy="14.500" r="9" fill="none" stroke="#8b8170" strokeWidth="2" />
      {tag && (
        <>
          <ellipse cx="21.500" cy="39" rx="15.500" ry="15" fill="#f29035" />
          <rect x="14.500" y="37" width="13" height="9" rx="1" fill="#fff" transform="rotate(-20 21 41)" />
          <path d="M25 36c-1-5 5-7 6.500-1" fill="none" stroke="#fff" strokeWidth="2" />
        </>
      )}
    </svg>
  );
}

function Preview() {
  return (
    <svg viewBox="0 0 77 77" className="h-[77px] w-[77px] translate-x-[2px] translate-y-[2px]">
      <defs><linearGradient id="pv" x2="0" y2="1"><stop stopColor="#7ea4e4" /><stop offset="1" stopColor="#b2cbf0" /></linearGradient></defs>
      <rect x="0" width="73" height="73" rx="16" fill="#f5f6f7" />
      <rect x="5" y="5.500" width="63" height="62" rx="10" fill="#2d4a7c" />
      <path d="M5 15.500a10 10 0 0 1 10-10h43a10 10 0 0 1 10 10V39H5Z" fill="url(#pv)" />
      <path d="M5 50c6-2 8 1 12 0M18 45c5 1 8-1 14 2" stroke="#9fb4cf" strokeWidth="1.500" fill="none" />
      <path d="M5 54c8-2 12 4 18 3s10 6 16 5v6H15a10 10 0 0 1-10-8Z" fill="#c9c3b8" />
      <path d="M40 50h28l5 18c1 5-2 8-6 8H41c-4 0-7-3-6-8Z" fill="#d8dadb" fillOpacity=".9" stroke="#4c4f52" strokeWidth="1.500" />
      <path d="M42 56l8-3 3 8-8 3ZM53 58l8-5 4 9-9 3Z" fill="#77838c" />
      <rect x="38" y="35" width="32" height="15" rx="5" fill="#1d1d1f" />
      <path d="M38 41h32" stroke="#4a4a4c" strokeWidth="1.500" />
    </svg>
  );
}

function PdfDoc() {
  return (
    <div className="relative flex h-[83px] w-[54px] flex-col rounded-[3px] bg-[linear-gradient(#f7f7f7,#e6e6e6)] shadow-[0_2px_3px_rgba(0,0,0,0.3)]">
      <div className="absolute -top-px right-0 h-[27px] w-[19px] rounded-bl-[2px] bg-white shadow-[-1px_2px_3px_rgba(0,0,0,0.3)]" />
      <div className="mt-[16px] ml-[5px] h-px w-2 bg-[#999]" />
      <div className="mt-[12px] ml-[5px] h-[2px] w-10 bg-[#bbb]" />
      <div className="mt-[5px] ml-[5px] h-px w-2 bg-[#aaa]" />
      <div className="mt-[7px] ml-[5px] h-px w-[6px] bg-[#aaa]" />
      <span className="mt-[18px] text-center text-[11px] leading-[22px] font-medium text-[#777]">PDF</span>
    </div>
  );
}

function Trash() {
  return (
    <svg viewBox="0 0 66 84" className="h-[84px] w-[66px] -translate-y-px">
      <defs><linearGradient id="tr" x2="1" y2="0"><stop stopColor="#cfcad8" /><stop offset=".4" stopColor="#ececee" /><stop offset="1" stopColor="#d0cdd6" /></linearGradient></defs>
      <path d="M1 12 10 78c3 7 43 7 46 0l9-66Z" fill="url(#tr)" />
      <ellipse cx="33" cy="12" rx="32" ry="8" fill="#bcb3cf" stroke="#ebe8f2" strokeWidth="1.500" />
      <path d="M6 13 14 4l8 3 3-5 8 5 7-5 6 6 7-2 6 9-8 10H14Z" fill="#efefef" />
      <path d="M14 5l6 9-8 2ZM27 8l6 9h-9ZM41 4l9 11-10-1ZM50 9l7 8-6 5ZM16 20l9-2 3 6Z" fill="#4a4644" />
      <path d="M22 14l5-4 3 6Z" fill="#4aa0d8" />
      <path d="M33 19l5-8 2 9ZM46 20l5-3-1 6Z" fill="#b8643a" />
      <path d="M14 34c8 8 18-2 28 4M16 52c10-5 22 6 32 0M28 68c8-6 14-2 20-6" stroke="#dcdce0" strokeWidth="3" fill="none" />
    </svg>
  );
}

type DockItem = { icon: React.ReactNode; badge?: string; dot?: boolean; bar?: boolean };

const dockMain: DockItem[] = [
  { icon: <Finder />, dot: true },
  { icon: <Launchpad />, bar: true },
  { icon: <Safari /> },
  { icon: <Messages className={TILE} />, dot: true },
  { icon: <Mail /> },
  { icon: <Maps /> },
  { icon: <Photos /> },
  { icon: <FaceTime /> },
  { icon: <Calendar />, badge: "4" },
  { icon: <Contacts /> },
  { icon: <Reminders />, badge: "1" },
  { icon: <Notes />, dot: true },
  { icon: <AppleTv /> },
  { icon: <Music /> },
  { icon: <Podcasts /> },
  { icon: <Firefox />, dot: true },
  { icon: <Keynote /> },
  { icon: <Numbers /> },
  { icon: <Pages /> },
  { icon: <AppStore /> },
  { icon: <SystemSettings />, badge: "2" },
];

const dockRecent: DockItem[] = [
  { icon: <PyCharm />, dot: true },
  { icon: <Keys className={TILE} tag />, dot: true },
  { icon: <Preview /> },
];

function DockCell({ icon, badge, dot, bar }: DockItem) {
  return (
    <div className="relative flex w-[94px] flex-col items-center">
      <div className="flex h-[102px] items-center justify-center">{icon}</div>
      {badge && (
        <span className="absolute top-[5px] left-[58px] flex size-[34px] items-center justify-center rounded-full bg-[#ee4f45] text-[21px] text-white shadow-[0_1px_3px_rgba(0,0,0,0.4)]">
          {badge}
        </span>
      )}
      {dot && <span className="absolute top-[98px] size-2 rounded-full bg-[#0c0058]" />}
      {bar && <span className="absolute top-[98px] h-2 w-[90px] rounded-full bg-[#05004f]" />}
    </div>
  );
}

function DockDivider() {
  return (
    <div className="flex w-[42px] justify-center pt-[12px]">
      <span className="h-[84px] w-[2px] bg-[#7222bd]" />
    </div>
  );
}

function Dock() {
  return (
    <div className="flex h-[136px] justify-center bg-[linear-gradient(to_bottom,rgba(5,0,30,0.6),rgba(10,0,40,0.35)_25px,transparent_110px),linear-gradient(to_right,#341390,#26126c_14%,#23106c_35%,#3a0ca8_53%,#3d0bb0_62%,#6011cc_72%,#4a0cb4_88%,#4f10d8)] pt-[14px]">
      <div className="flex h-[112px] w-[2727px] rounded-[34px] border-2 border-[#ffffff30] bg-[linear-gradient(to_right,#7d5ccb,#7660c6_12%,#6f5ec9_22%,#7460d0_36%,#8358ea_46%,#8a5af5_52%,#a558f3_62%,#b158f5_71%,#a959f5_80%,#9458f5_91%,#8c5bf0)] pl-[3px]">
        {dockMain.map((d, i) => (
          <DockCell key={i} {...d} />
        ))}
        <DockDivider />
        {dockRecent.map((d, i) => (
          <DockCell key={i} {...d} />
        ))}
        <DockDivider />
        <DockCell icon={<PdfDoc />} />
        <div className="flex w-[94px] justify-end pt-[64px] pr-[7px]">
          <Keys className="size-[27px] rounded-[6px]" />
        </div>
        <div className="flex w-[94px] justify-end pt-[64px] pr-[7px]">
          <Messages className="size-[27px] rounded-[6px]" />
        </div>
        <DockCell icon={<Trash />} />
      </div>
    </div>
  );
}

export default function App() {
  return (
    <div className="flex h-[1800px] w-[2880px] flex-col overflow-hidden bg-[#23106c] [font-family:Inter,sans-serif]">
      <MenuBar />
      <div className="h-px bg-[linear-gradient(to_right,#9b2f95,#b04a8c_15%,#b8586c_23%,#8f93b4_24%,#9ea3c0_60%,#b878a8_88%,#a83f80)]" />
      <div className="[background:linear-gradient(to_right,#94309a,#b3568f)_top/100%_100px_no-repeat,linear-gradient(to_right,#2a1078,#1a0c50_20%,#36095f_60%,#4109c0)]">
        <div className="flex h-[1615px] flex-col overflow-hidden rounded-[22px] border-y border-[#0b0712]">
          <TabBar />
          <Toolbar />
          <div className="h-[2px] shrink-0 bg-[#cccccc]" />
          <Page />
        </div>
      </div>
      <Dock />
    </div>
  );
}
